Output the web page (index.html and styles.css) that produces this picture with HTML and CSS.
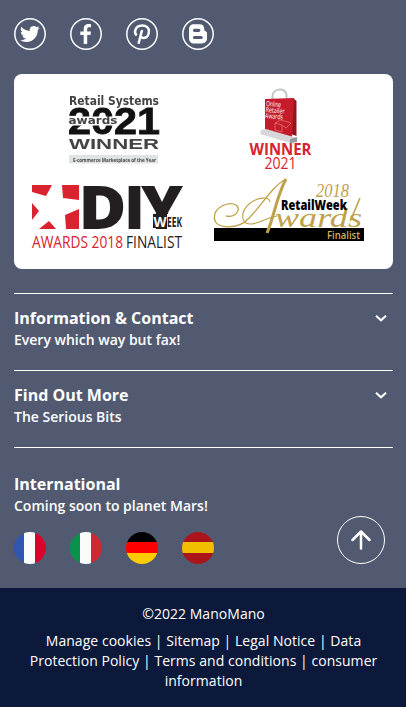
FILE: index.html
```html
<!DOCTYPE html>
<html lang="en">
<head>
<meta charset="utf-8">
<title>ManoMano</title>
<meta name="viewport" content="width=device-width, initial-scale=1">
<link rel="stylesheet" href="styles.css">
</head>
<body>
<main class="main">
  <nav class="row">
    <a class="social"><svg viewBox="0 0 32 32"><circle class="ring" cx="16" cy="16" r="15.2"/><path transform="translate(6.1 6.2) scale(.82)" d="M23.95 4.57a10 10 0 0 1-2.82.77 4.96 4.96 0 0 0 2.16-2.72c-.95.55-2 .95-3.13 1.18a4.92 4.92 0 0 0-8.38 4.48C7.69 8.1 4.07 6.13 1.64 3.16a4.92 4.92 0 0 0 1.52 6.57 4.9 4.9 0 0 1-2.23-.61v.06a4.92 4.92 0 0 0 3.95 4.83 5 5 0 0 1-2.21.08 4.94 4.94 0 0 0 4.6 3.42A9.87 9.87 0 0 1 0 19.54a14 14 0 0 0 7.55 2.21c9.05 0 14-7.5 14-13.98l-.02-.64a9.94 9.94 0 0 0 2.42-2.56z"/></svg></a>
    <a class="social"><svg viewBox="0 0 32 32"><circle class="ring" cx="16" cy="16" r="15.2"/><path d="M13.7 26V17H10.3V13.5H13.7V10.7C13.7 7.5 15.6 6 18.5 6H21V9.3H19.1C17.8 9.3 17.2 9.8 17.2 11.2V13.5H20.9L20.5 17H17.2V26Z"/></svg></a>
    <a class="social"><svg viewBox="0 0 32 32"><circle class="ring" cx="16" cy="16" r="15.2"/><path class="pin" d="M10.8 17.3C9.2 16.2 8.8 14.5 9.2 12.5C10 9.2 13 7.4 16.3 7.4C20.4 7.4 22.9 10 22.9 13.3C22.9 17.2 20.7 20 17.7 20C16 20 14.9 19.2 14.6 18M16.1 12L12.5 25.7"/></svg></a>
    <a class="social"><svg viewBox="0 0 32 32"><circle class="ring" cx="16" cy="16" r="15.2"/><path fill-rule="evenodd" d="M12 6.3H17.6C20.6 6.3 22.3 8.3 22.3 11V12C22.3 13.5 25 13 25 15V20.3C25 23.5 22.8 25.5 20 25.5H12C9 25.5 7 23.6 7 20.5V11.2C7 8.3 9 6.3 12 6.3ZM12.5 10.7A1.6 1.6 0 0 0 12.5 13.9H16.8A1.6 1.6 0 0 0 16.8 10.7ZM12.5 17.9A1.6 1.6 0 0 0 12.5 21.1H19.2A1.6 1.6 0 0 0 19.2 17.9Z"/></svg></a>
  </nav>

  <section class="awards">
    <svg class="logo soft" viewBox="26 86 162 86">
      <text class="tech" x="69" y="104.5" font-size="12" textLength="90" lengthAdjust="spacingAndGlyphs">Retail Systems</text>
      <text class="year" x="68" y="134" font-size="36" textLength="92" lengthAdjust="spacingAndGlyphs">2021</text>
      <path fill="#fff" d="M67 116.5H118V125.5H67Z"/>
      <text class="tech" x="68.5" y="124" font-size="11" textLength="49" lengthAdjust="spacingAndGlyphs">awards</text>
      <text class="winner" x="69" y="149" font-size="15" textLength="90" lengthAdjust="spacingAndGlyphs">WINNER</text>
      <path fill="#dfe3e3" d="M69 155H158V163.5H69Z"/>
      <text class="tiny" x="73" y="161.5" font-size="6" textLength="83" lengthAdjust="spacingAndGlyphs">E-commerce Marketplace of the Year</text>
    </svg>
    <svg class="logo" viewBox="208 86 162 86">
      <path fill="none" stroke="#c3c5c8" stroke-width="2" d="M272.5 101V96C273 88 286 87 286.5 95V100"/>
      <path fill="#8e1720" d="M293 98L296.5 101V136L291 134Z"/>
      <path fill="#c51c2b" d="M265 99L294 98L292 137L265 131Z"/>
      <g fill="#fff" font-family="Open Sans" font-size="7" transform="rotate(5 266 105)">
        <text x="266" y="106" textLength="15" lengthAdjust="spacingAndGlyphs">Online</text>
        <text x="266" y="112" textLength="19" lengthAdjust="spacingAndGlyphs">Retailer</text>
        <text x="266" y="118" textLength="18" lengthAdjust="spacingAndGlyphs">Awards</text>
      </g>
      <path fill="none" stroke="#e88" stroke-width=".6" d="M275 123L281 120L291 123L286 128L282 125L275 123V130L282 132V125"/>
      <path fill="#d6d7da" d="M261 130L266 129L297 138V142L290 143L260 134Z"/>
      <path fill="#96999e" d="M290 139L297 137V142L290 143Z"/>
      <text class="red bold" x="249.5" y="154.5" font-size="15.5" textLength="62" lengthAdjust="spacingAndGlyphs">WINNER</text>
      <text class="red" x="264.5" y="168.5" font-size="15.5" textLength="32" lengthAdjust="spacingAndGlyphs">2021</text>
    </svg>
    <svg class="logo" viewBox="26 174 162 82">
      <path fill="#d9232e" d="M32 185H52L46 196L32 192ZM62 185H79V200L63 198ZM79 209V229H66L65 215ZM32 203L39 211L32 220ZM39 229L49 221L56 229Z"/>
      <g fill="#231f20" font-family="Open Sans" font-weight="800">
        <text x="78.5" y="229" font-size="61" textLength="48" lengthAdjust="spacingAndGlyphs">D</text>
        <text x="124" y="229" font-size="61" textLength="21" lengthAdjust="spacingAndGlyphs">I</text>
        <text x="141" y="229" font-size="61" textLength="42" lengthAdjust="spacingAndGlyphs">Y</text>
      </g>
      <path fill="#231f20" d="M153 214H167V228H153Z"/>
      <path fill="#fff" d="M167 214H184V230H167Z"/>
      <text class="bold" fill="#fff" x="153.5" y="227" font-size="15" textLength="13" lengthAdjust="spacingAndGlyphs">W</text>
      <text class="bold" fill="#231f20" x="167" y="227" font-size="14" textLength="15" lengthAdjust="spacingAndGlyphs">EEK</text>
      <text class="red light" x="32" y="248" font-size="16" textLength="91" lengthAdjust="spacingAndGlyphs">AWARDS 2018</text>
      <text class="light" fill="#231f20" x="126" y="248" font-size="16" textLength="56" lengthAdjust="spacingAndGlyphs">FINALIST</text>
    </svg>
    <svg class="logo" viewBox="208 174 162 82">
      <path d="M214 228H364V241H214Z"/>
      <g fill="none" stroke="#bfa14a">
        <path stroke-width="1.3" d="M286 179C272 186 260 208 248 219C239 229 216 230 214.500 219C213 207 229 201 236 205C242 210 235 218 226 216"/>
        <path stroke-width="1.1" d="M270 202C270 196 257 197 249 204C240 212 241 224 250 224C260 224 267 217 277 216"/>
        <path stroke-width="3" d="M286 179C277 195 274 217 267 233"/>
      </g>
      <g fill="#bfa14a" font-family="Liberation Serif" font-style="italic">
        <text x="275" y="227" font-size="27" textLength="87" lengthAdjust="spacingAndGlyphs">wards</text>
        <text x="316" y="197" font-size="18" textLength="33" lengthAdjust="spacingAndGlyphs">2018</text>
      </g>
      <path fill="none" stroke="#bfa14a" stroke-width="1.5" d="M350 221C354 213 357 205 360 198"/>
      <text class="retail" x="281" y="210" font-size="13.5" textLength="66" lengthAdjust="spacingAndGlyphs">RetailWeek</text>
      <text fill="#d1b35a" font-family="Open Sans" font-weight="600" x="327" y="238.5" font-size="11" textLength="33" lengthAdjust="spacingAndGlyphs">Finalist</text>
    </svg>
  </section>

  <section class="panel">
    <div><h2>Information &amp; Contact</h2><p>Every which way but fax!</p></div>
    <svg class="chevron" viewBox="0 0 24 24"><path d="M7 9.7L12 14.3L17 9.7"/></svg>
  </section>
  <section class="panel">
    <div><h2>Find Out More</h2><p>The Serious Bits</p></div>
    <svg class="chevron" viewBox="0 0 24 24"><path d="M7 9.7L12 14.3L17 9.7"/></svg>
  </section>
  <section class="international">
    <h2>International</h2>
    <p>Coming soon to planet Mars!</p>
    <div class="row flags">
      <span class="flag fr"></span><span class="flag it"></span><span class="flag de"></span><span class="flag es"></span>
    </div>
  </section>
  <a class="to-top"><svg viewBox="0 0 48 48"><circle cx="24" cy="24" r="23.5"/><path d="M24 32.5V15.5M15.5 24L24 15.5L32.5 24"/></svg></a>
</main>
<footer class="footer">
  <p>©2022 ManoMano</p>
  <p class="links"><a>Manage cookies</a> | <a>Sitemap</a> | <a>Legal Notice</a> | <a>Data Protection Policy</a> | <a>Terms and conditions</a> | <a>consumer information</a></p>
</footer>
</body>
</html>
```
FILE: styles.css
```css
* { box-sizing: border-box; }
body { margin: 0; background: #0c193a; color: #fff; font: 14px/20px "Open Sans", sans-serif; }
h2, p { margin: 0; }
h2 { font-size: 16px; line-height: 24px; font-weight: 700; }
svg { display: block; }
.main { position: relative; height: 588px; padding: 18px 13px 0 14px; background: #525a72; }
.main p { font-weight: 600; }
.row { display: flex; gap: 24px; }
.social { width: 32px; height: 32px; }
.social svg { fill: #fff; }
.social .ring { fill: none; stroke: #fff; stroke-width: 1.5; }
.social .pin { fill: none; stroke: #fff; stroke-width: 2.5; }

.awards { display: grid; grid-template-columns: 162px 162px; gap: 2px 20px; align-content: start; height: 195px; margin: 24px 0; padding: 12px; border-radius: 8px; background: #fff; }
.logo { width: 162px; overflow: visible; font-family: "Open Sans", sans-serif; }
.soft { filter: blur(.4px); }
.tech { font-family: "DejaVu Sans", sans-serif; font-weight: 700; fill: #444; }
.winner { font-family: "Liberation Sans", sans-serif; font-weight: 700; fill: #444; }
.year { font-family: "Liberation Sans", sans-serif; font-weight: 700; fill: #111; stroke: #111; stroke-width: .8; }
.tiny { font-weight: 700; fill: #444; }
.red { fill: #d7232e; }
.bold { font-weight: 700; }
.light { font-weight: 400; }
.retail { font-weight: 800; fill: #000; }

.panel { display: flex; justify-content: space-between; height: 77px; padding-top: 12px; border-top: 1px solid #fff; }
.chevron { width: 24px; height: 24px; fill: none; stroke: #fff; stroke-width: 2; }
.international { padding-top: 24px; border-top: 1px solid #fff; }
.flags { margin-top: 16px; }
.flag { width: 32px; height: 32px; border-radius: 50%; }
.fr { background: linear-gradient(90deg, #3156af 10.5px, #fafafa 10.5px 21.5px, #d90429 21.5px); }
.it { background: linear-gradient(90deg, #08924a 10.5px, #fafafa 10.5px 21.5px, #ce2830 21.5px); }
.de { background: linear-gradient(#000 10.5px, #f00 10.5px 21.5px, #fc0 21.5px); }
.es { background: linear-gradient(#aa151b 10.5px, #f1bf00 10.5px 21.5px, #aa151b 21.5px); }
.to-top { position: absolute; right: 21px; bottom: 24px; width: 48px; height: 48px; }
.to-top svg { fill: none; stroke: #fff; }
.to-top path { stroke-width: 2.5; stroke-linecap: round; stroke-linejoin: round; }
.footer { height: 119px; padding: 16px 14px 16px 15px; text-align: center; letter-spacing: .04px; }
.links { margin-top: 7px; }
```
